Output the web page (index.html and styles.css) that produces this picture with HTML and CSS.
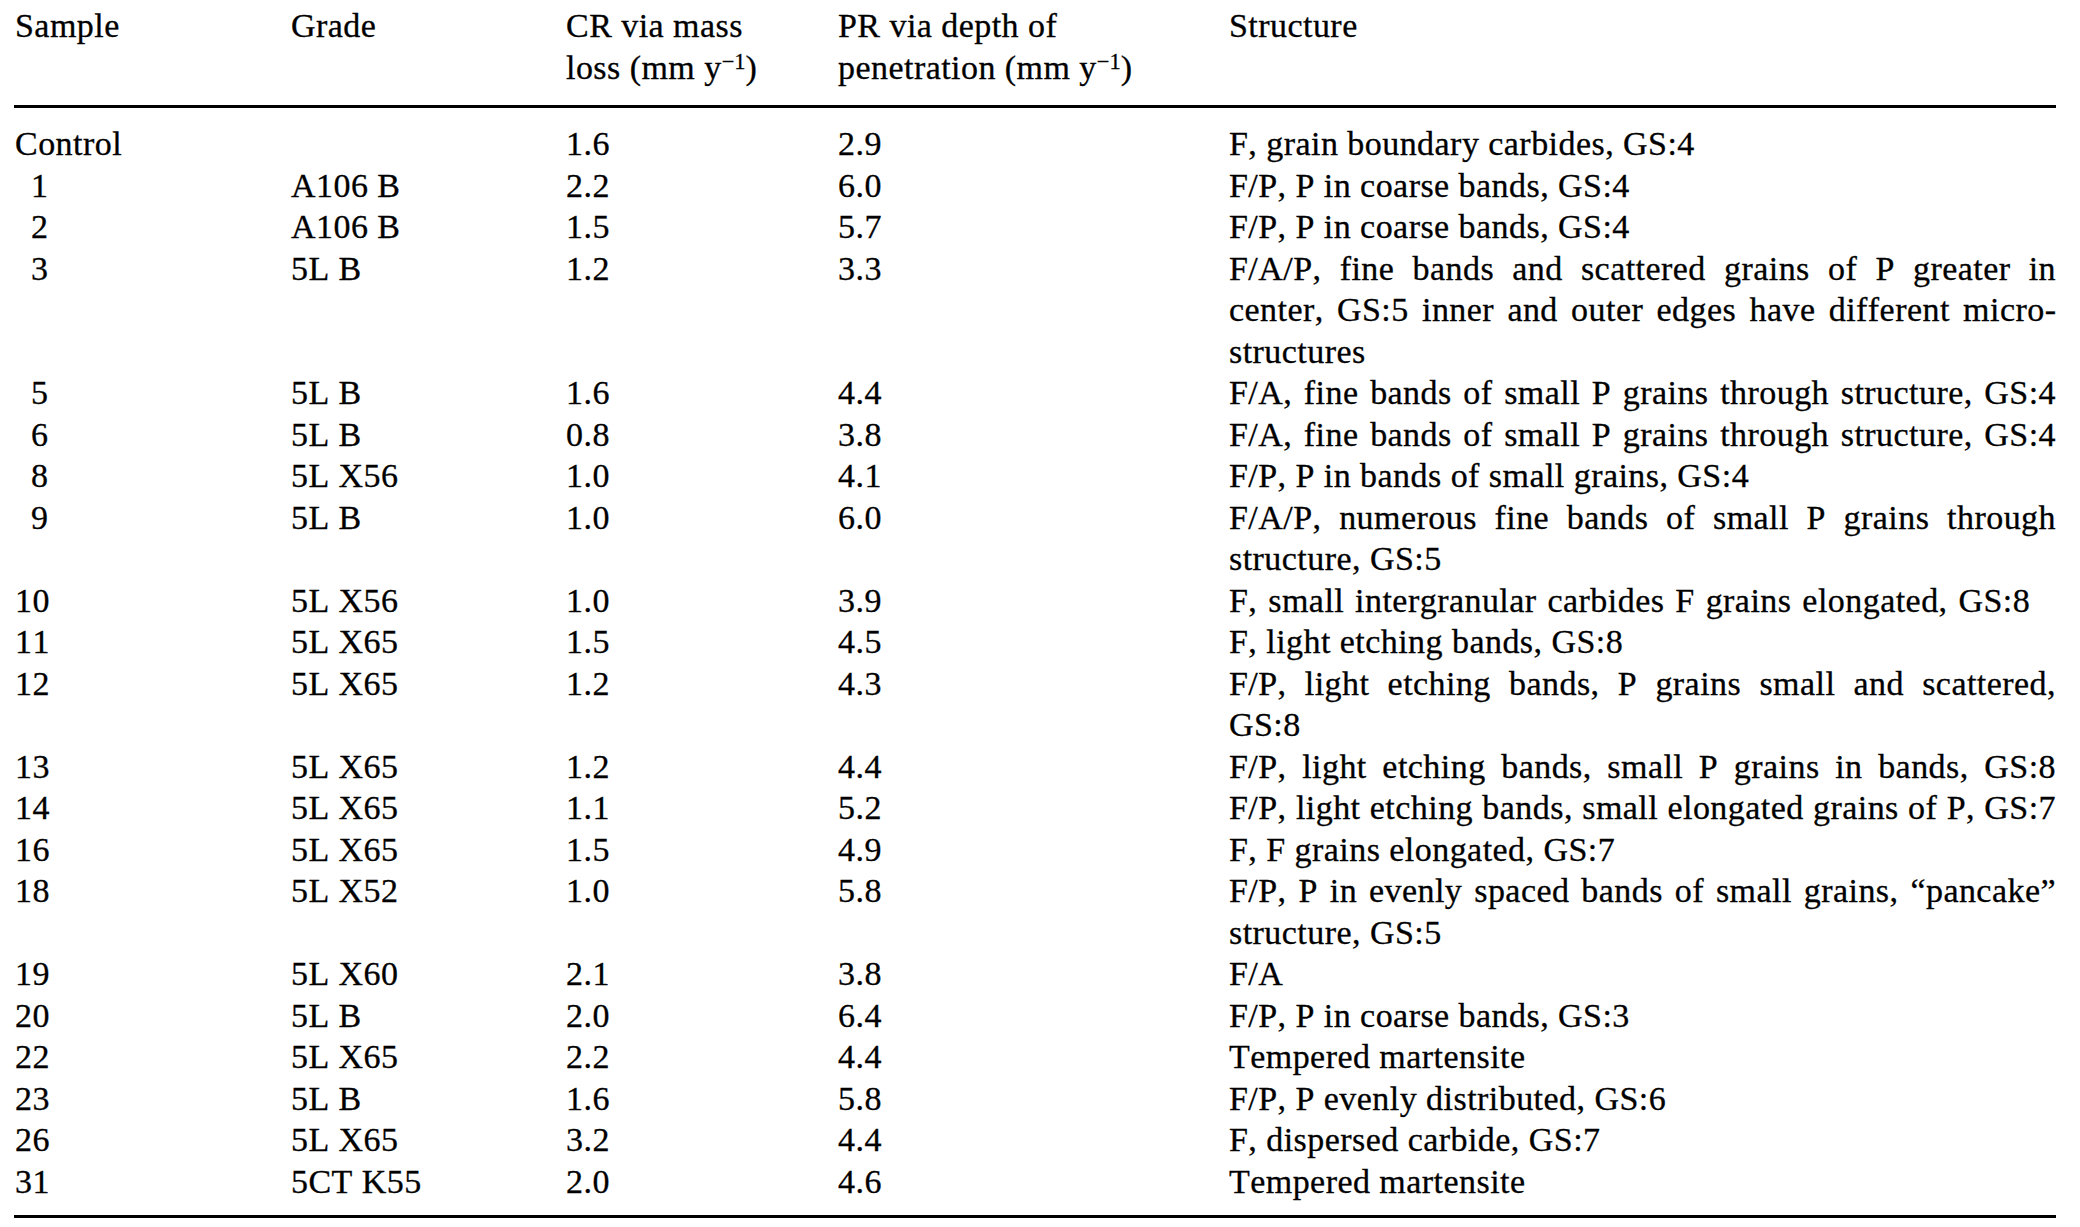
FILE: index.html
```html
<!DOCTYPE html>
<html lang="en"><head>
  <meta charset="utf-8">
  <title>Corrosion and pitting rates by sample</title>
  <link rel="stylesheet" href="styles.css">
</head>
<body>

<table class="rates">
<colgroup>
<col class="c-sample"><col class="c-grade"><col class="c-cr"><col class="c-pr"><col class="c-struct">
</colgroup>
<thead>
<tr>
<th>Sample</th>
<th>Grade</th>
<th>CR via mass loss (mm y<sup>&minus;1</sup>)</th>
<th>PR via depth of penetration (mm y<sup>&minus;1</sup>)</th>
<th>Structure</th>
</tr>
</thead>
<tbody>
<tr><td>Control</td><td></td><td>1.6</td><td>2.9</td><td>F, grain boundary carbides, GS:4</td></tr>
<tr><td class="one">1</td><td>A106 B</td><td>2.2</td><td>6.0</td><td>F/P, P in coarse bands, GS:4</td></tr>
<tr><td class="one">2</td><td>A106 B</td><td>1.5</td><td>5.7</td><td>F/P, P in coarse bands, GS:4</td></tr>
<tr><td class="one">3</td><td>5L B</td><td>1.2</td><td>3.3</td><td>F/A/P, fine bands and scattered grains of P greater in center, GS:5 inner and outer edges have different micro&shy;structures</td></tr>
<tr><td class="one">5</td><td>5L B</td><td>1.6</td><td>4.4</td><td class="fill">F/A, fine bands of small P grains through structure, GS:4</td></tr>
<tr><td class="one">6</td><td>5L B</td><td>0.8</td><td>3.8</td><td class="fill">F/A, fine bands of small P grains through structure, GS:4</td></tr>
<tr><td class="one">8</td><td>5L X56</td><td>1.0</td><td>4.1</td><td>F/P, P in bands of small grains, GS:4</td></tr>
<tr><td class="one">9</td><td>5L B</td><td>1.0</td><td>6.0</td><td>F/A/P, numerous fine bands of small P grains through structure, GS:5</td></tr>
<tr><td>10</td><td>5L X56</td><td>1.0</td><td>3.9</td><td class="wide">F, small intergranular carbides F grains elongated, GS:8</td></tr>
<tr><td>11</td><td>5L X65</td><td>1.5</td><td>4.5</td><td>F, light etching bands, GS:8</td></tr>
<tr><td>12</td><td>5L X65</td><td>1.2</td><td>4.3</td><td>F/P, light etching bands, P grains small and scattered, GS:8</td></tr>
<tr><td>13</td><td>5L X65</td><td>1.2</td><td>4.4</td><td class="fill">F/P, light etching bands, small P grains in bands, GS:8</td></tr>
<tr><td>14</td><td>5L X65</td><td>1.1</td><td>5.2</td><td class="fill">F/P, light etching bands, small elongated grains of P, GS:7</td></tr>
<tr><td>16</td><td>5L X65</td><td>1.5</td><td>4.9</td><td>F, F grains elongated, GS:7</td></tr>
<tr><td>18</td><td>5L X52</td><td>1.0</td><td>5.8</td><td>F/P, P in evenly spaced bands of small grains, &ldquo;pancake&rdquo; structure, GS:5</td></tr>
<tr><td>19</td><td>5L X60</td><td>2.1</td><td>3.8</td><td>F/A</td></tr>
<tr><td>20</td><td>5L B</td><td>2.0</td><td>6.4</td><td>F/P, P in coarse bands, GS:3</td></tr>
<tr><td>22</td><td>5L X65</td><td>2.2</td><td>4.4</td><td>Tempered martensite</td></tr>
<tr><td>23</td><td>5L B</td><td>1.6</td><td>5.8</td><td>F/P, P evenly distributed, GS:6</td></tr>
<tr><td>26</td><td>5L X65</td><td>3.2</td><td>4.4</td><td>F, dispersed carbide, GS:7</td></tr>
<tr><td>31</td><td>5CT K55</td><td>2.0</td><td>4.6</td><td>Tempered martensite</td></tr>
</tbody>
</table>

</body>
</html>
```

FILE: styles.css
```css
html,body {
  color:#000; background-color:#fff; padding:0; margin:0;
}
body { overflow:hidden; }

.rates {
  margin: 5px 0 0 14px;
  width: 2042px;
  table-layout: fixed;
  border-collapse: collapse;
  border-bottom: 3px solid #000;
  font-family: "Liberation Serif", "Times New Roman", serif;
  font-size: 34px;
  font-kerning: none;
  letter-spacing: 0.45px;
  line-height: 41.5px;
  -webkit-text-stroke: 0.3px #000;
}
.c-sample { width: 277px; }
.c-grade  { width: 275px; }
.c-cr     { width: 272px; }
.c-pr     { width: 391px; }
.c-struct { width: 827px; }

.rates th, .rates td {
  padding: 0;
  text-align: left;
  vertical-align: top;
  font-weight: normal;
}
.rates th { padding: 0 40px 17px 0; border-bottom: 3px solid #000; }
.rates th:last-child { padding-right: 0; }
.rates th:first-child, .rates td:first-child { padding-left: 1px; }
.rates td:last-child { text-align: justify; }
.rates td.one { padding-left: 17px; }
.rates td.fill { text-align-last: justify; }
.rates td.wide { word-spacing: 2px; }

.rates tbody tr:first-child td { padding-top: 15px; }
.rates tbody tr:last-child td { padding-bottom: 13px; }

sup {
  font-size: 0.66em;
  line-height: 0;
  vertical-align: 0.45em;
  letter-spacing: 0;
}
```
